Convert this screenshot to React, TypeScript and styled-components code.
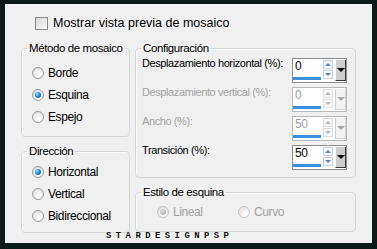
import styled, { createGlobalStyle, css } from 'styled-components'

const GlobalStyle = createGlobalStyle`
  html, body {
    margin: 0;
    padding: 0;
    background: #0c1919;
  }
  body {
    font-family: 'Liberation Sans', Arial, sans-serif;
    font-size: 11px;
    letter-spacing: -0.4px;
    color: #000;
    white-space: nowrap;
  }
`

const Panel = styled.div`
  position: relative;
  box-sizing: border-box;
  margin: 4px 5px 0;
  height: 239px;
  padding: 13px 16px 0;
  background: #f0f0f0;
`

const CheckRow = styled.label`
  display: flex;
  align-items: center;
  gap: 5px;
  height: 13px;
  padding-left: 14px;
  line-height: 13px;
  font-size: 12.5px;
  letter-spacing: 0;
`

const CheckBox = styled.span`
  box-sizing: border-box;
  width: 13px;
  height: 13px;
  border: 1px solid #8c8c8c;
  background: linear-gradient(135deg, #d4d4d4 0%, #ececec 60%, #fafafa 100%);
`

const Columns = styled.div`
  display: grid;
  grid-template-columns: 109px 221px;
  column-gap: 5px;
  margin-top: 12px;
`

const Column = styled.div`
  display: flex;
  flex-direction: column;
  gap: 8px;
`

const Group = styled.fieldset<{ $pt: number; $pb: number }>`
  margin: 0;
  min-width: 0;
  padding: ${(p) => p.$pt}px 8px ${(p) => p.$pb}px 5px;
  border: 1px solid #d2d7dc;
  border-radius: 4px;
  box-shadow: inset 1px 1px 0 #fbfbfb;
`

const Legend = styled.legend`
  margin-left: 0;
  padding: 0 2px;
  line-height: 13px;
  font-size: 11.5px;
`

const RadioList = styled.div`
  display: flex;
  flex-direction: column;
  padding-left: 5px;
`

const RadioRow = styled.label<{ $w?: number }>`
  display: flex;
  align-items: center;
  gap: 4px;
  height: 22px;
  width: ${(p) => (p.$w ? `${p.$w}px` : 'auto')};
  color: ${(p) => (p.$w ? '#a3a3a3' : '#000')};
  font-size: 12px;
`

const Radio = styled.span<{ $on?: boolean; $off?: boolean }>`
  position: relative;
  box-sizing: border-box;
  width: 12px;
  height: 12px;
  border-radius: 50%;
  border: 1px solid ${(p) => (p.$off ? '#c6c6c6' : '#9a9fa4')};
  background: radial-gradient(circle at 65% 70%, #ffffff 0%, #f2f2f2 40%, #d6d6d6 100%);
  flex: none;
  ${(p) =>
    p.$on &&
    css`
      &::after {
        content: '';
        position: absolute;
        left: 2px;
        top: 2px;
        width: 6px;
        height: 6px;
        border-radius: 50%;
        background: ${p.$off
          ? 'radial-gradient(circle at 35% 35%, #e0e0e0 0%, #b4b4b4 70%, #9c9c9c 100%)'
          : 'radial-gradient(circle at 35% 35%, #8fe0ff 0%, #1f8ad8 45%, #0b4b8f 100%)'};
      }
    `}
`

const RadioGroupRow = styled.div`
  display: flex;
  padding-left: 16px;
`

const ConfigList = styled.div`
  display: flex;
  flex-direction: column;
  gap: 4px;
  padding-left: 1px;
`

const ConfigRow = styled.div`
  display: flex;
  align-items: flex-start;
  justify-content: space-between;
  height: 25px;
`

const FieldLabel = styled.span<{ $off?: boolean }>`
  line-height: 13px;
  margin-top: -1px;
  font-size: 11px;
  color: ${(p) => (p.$off ? '#a3a3a3' : '#000')};
`

const Spin = styled.div<{ $off?: boolean }>`
  box-sizing: border-box;
  display: flex;
  width: 55px;
  height: 25px;
  border: 1px solid ${(p) => (p.$off ? '#b9b9b9' : '#8d8d8d')};
  background: #fff;
  color: ${(p) => (p.$off ? '#a0a0a0' : '#000')};
`

const ValueCol = styled.div`
  display: flex;
  flex-direction: column;
  justify-content: space-between;
  width: 29px;
  padding-bottom: 2px;
`

const Value = styled.span`
  padding: 1px 0 0 2px;
  line-height: 13px;
  font-size: 12px;
`

const Bar = styled.div`
  height: 3px;
  width: 28px;
  background: #3b8fe0;
`

const Arrows = styled.div`
  display: flex;
  flex-direction: column;
  gap: 1px;
  width: 10px;
  margin: 1px 2px 0 2px;
`

const Arrow = styled.div<{ $up?: boolean; $off?: boolean }>`
  display: flex;
  align-items: center;
  justify-content: center;
  height: 7px;
  border: 1px solid ${(p) => (p.$off ? '#dcdcdc' : '#c5d0dc')};
  background: #f7f9fb;
  &::after {
    content: '';
    border-left: 3px solid transparent;
    border-right: 3px solid transparent;
    ${(p) =>
      p.$up
        ? `border-bottom: 3px solid ${p.$off ? '#b8b8b8' : '#5d7fc4'};`
        : `border-top: 3px solid ${p.$off ? '#b8b8b8' : '#5d7fc4'};`}
  }
`

const Drop = styled.div<{ $off?: boolean }>`
  box-sizing: border-box;
  display: flex;
  align-items: center;
  justify-content: center;
  width: 11px;
  height: 21px;
  margin-top: 1px;
  background: ${(p) => (p.$off ? '#f3f3f3' : '#cdcdcd')};
  border-left: 1px solid ${(p) => (p.$off ? '#cfcfcf' : '#ffffff')};
  border-right: 1px solid ${(p) => (p.$off ? '#cfcfcf' : '#3a3a3a')};
  border-bottom: 1px solid ${(p) => (p.$off ? '#cfcfcf' : '#3a3a3a')};
  &::after {
    content: '';
    border-left: 4px solid transparent;
    border-right: 4px solid transparent;
    border-top: 4px solid ${(p) => (p.$off ? '#a8a8a8' : '#000')};
  }
`

const Watermark = styled.div`
  position: absolute;
  left: 101px;
  top: 228px;
  font-family: 'Liberation Mono', monospace;
  font-weight: bold;
  font-size: 9px;
  letter-spacing: 4.4px;
  line-height: 9px;
  color: #111;
  text-shadow: 1px 1px 0 #fff;
`

const SpinBox = ({ value, off }: { value: string; off?: boolean }) => (
  <Spin $off={off}>
    <ValueCol>
      <Value>{value}</Value>
      <Bar />
    </ValueCol>
    <Arrows>
      <Arrow $up $off={off} />
      <Arrow $off={off} />
    </Arrows>
    <Drop $off={off} />
  </Spin>
)

const settings = [
  { label: 'Desplazamiento horizontal (%):', value: '0', off: false },
  { label: 'Desplazamiento vertical (%):', value: '0', off: true },
  { label: 'Ancho (%):', value: '50', off: true },
  { label: 'Transición (%):', value: '50', off: false },
]

export default function App() {
  return (
    <>
      <GlobalStyle />
      <Panel>
        <CheckRow>
          <CheckBox />
          Mostrar vista previa de mosaico
        </CheckRow>
        <Columns>
          <Column>
            <Group $pt={7} $pb={8}>
              <Legend>Método de mosaico</Legend>
              <RadioList>
                <RadioRow><Radio />Borde</RadioRow>
                <RadioRow><Radio $on />Esquina</RadioRow>
                <RadioRow><Radio />Espejo</RadioRow>
              </RadioList>
            </Group>
            <Group $pt={3} $pb={5}>
              <Legend>Dirección</Legend>
              <RadioList>
                <RadioRow><Radio $on />Horizontal</RadioRow>
                <RadioRow><Radio />Vertical</RadioRow>
                <RadioRow><Radio />Bidireccional</RadioRow>
              </RadioList>
            </Group>
          </Column>
          <Column>
            <Group $pt={3} $pb={7}>
              <Legend>Configuración</Legend>
              <ConfigList>
                {settings.map((s) => (
                  <ConfigRow key={s.label}>
                    <FieldLabel $off={s.off}>{s.label}</FieldLabel>
                    <SpinBox value={s.value} off={s.off} />
                  </ConfigRow>
                ))}
              </ConfigList>
            </Group>
            <Group $pt={2} $pb={8}>
              <Legend>Estilo de esquina</Legend>
              <RadioGroupRow>
                <RadioRow $w={81}><Radio $on $off />Lineal</RadioRow>
                <RadioRow $w={60}><Radio $off />Curvo</RadioRow>
              </RadioGroupRow>
            </Group>
          </Column>
        </Columns>
        <Watermark>STARDESIGNPSP</Watermark>
      </Panel>
    </>
  )
}
